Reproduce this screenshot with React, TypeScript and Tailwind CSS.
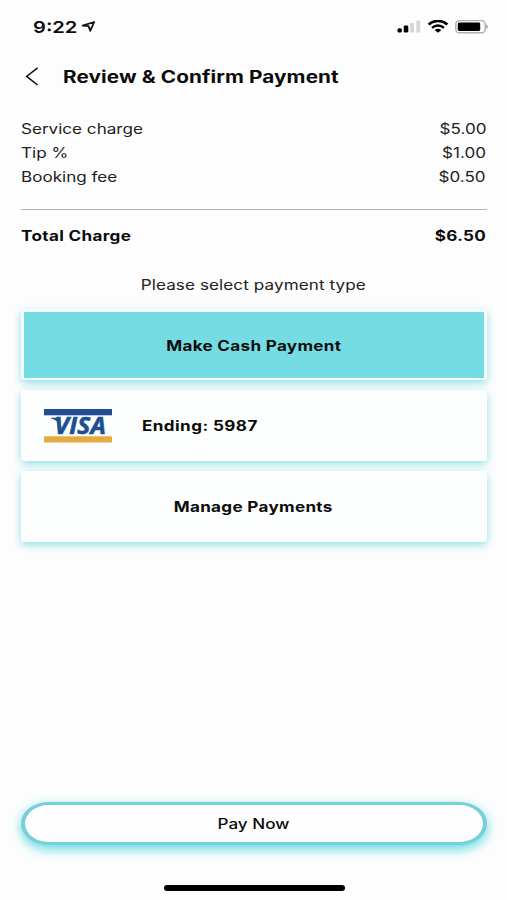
import type { ReactNode } from "react";

const charges = [
    { label: "Service charge", amount: "$5.00" },
    { label: "Tip %", amount: "$1.00" },
    { label: "Booking fee", amount: "$0.50" },
];

const SignalIcon = () => (
    <svg width="24" height="14" viewBox="0 0 24 14">
        <rect x="0.5" y="8.2" width="4.4" height="4.4" rx="1.6" fill="#000" />
        <rect x="6.7" y="5.6" width="4.6" height="7" rx="1.4" fill="#000" />
        <rect x="13.2" y="3" width="3.8" height="9.6" rx="1.2" fill="#d6d6d6" />
        <rect x="19.4" y="0.6" width="3.8" height="12" rx="1.2" fill="#d6d6d6" />
    </svg>
)

const WifiIcon = () => (
    <svg width="22" height="14" viewBox="0 0 22 14" fill="none" stroke="#000">
        <path d="M1.6 4.4C7 -0.2 15 -0.2 20.4 4.4" strokeWidth="2.6" />
        <path d="M5 7.8C8.5 4.8 13.5 4.8 17 7.8" strokeWidth="2.4" />
        <path d="M7.6 9.9C9.6 8.2 12.4 8.2 14.4 9.9L11 12.8Z" fill="#000" stroke="none" />
    </svg>
)

const BatteryIcon = () => (
    <svg width="34" height="14" viewBox="0 0 34 14">
        <rect x="0.8" y="0.6" width="29.4" height="12.2" rx="3.6" fill="none" stroke="#b2b2b2" strokeWidth="1.5" />
        <rect x="2.8" y="2.5" width="22.4" height="8.4" rx="1.4" fill="#000" />
        <path d="M31.2 4.6C33.6 5.1 33.6 8.3 31.2 8.8Z" fill="#a9a9a9" />
    </svg>
)

const VisaLogo = () => (
    <svg width="68" height="34" viewBox="0 0 68 34">
        <rect x="0" y="0" width="68" height="6.3" fill="#204e92" />
        <rect x="0" y="27.3" width="68" height="6.2" fill="#e5aa42" />
        <path d="M7 8.8H14.5L17 20C15.4 14 12 10.4 7 9.5Z" fill="#204e92" />
        <text x="10.5" y="25" textLength="51.5" lengthAdjust="spacingAndGlyphs" className="font-['Open_Sans',sans-serif] text-[22.5px] font-bold italic" fill="#204e92" stroke="#204e92" strokeWidth="0.6">VISA</text>
    </svg>
)

// wide lettering, stretched from the given side
const Wide = ({ children, className = "" }: { children: ReactNode, className?: string }) => (
    <span className={"inline-block whitespace-nowrap scale-x-[1.22] " + className}>{children}</span>
)

export default function App () {
    return (
        <div className="flex h-[900px] w-[507px] flex-col overflow-hidden bg-[#fdfdfd] font-['Inter',sans-serif] text-[#0c0c0c]">
            <div className="flex h-[52px] items-center justify-between pl-[33px] pr-[18px] pt-px">
                <div className="flex items-center">
                    <Wide className="w-[48px] origin-left pt-px text-[16.5px] font-semibold">9:22</Wide>
                    <svg width="15" height="12" viewBox="0 0 15 12" fill="none" stroke="#111" strokeWidth="1.8" strokeLinejoin="round">
                        <path d="M1.6 4.6L13.2 1L9.2 9.8L7.6 5.2Z" />
                    </svg>
                </div>
                <div className="flex items-center gap-[6px]">
                    <SignalIcon />
                    <WifiIcon />
                    <BatteryIcon />
                </div>
            </div>

            <div className="flex h-[48px] items-center pl-[25px]">
                <svg width="14" height="20" viewBox="0 0 14 20" fill="none" stroke="#111" strokeWidth="1.5">
                    <path d="M12.6 1.8L1.6 10.4L12.6 19" />
                </svg>
                <Wide className="ml-[24px] origin-left pt-[3px] text-[17px] font-bold tracking-[0.08px]">Review &amp; Confirm Payment</Wide>
            </div>

            <div className="ml-[21px] mr-[20px] mt-[17px] border-b border-[#b4b4b4] pb-[20px] text-[14px] leading-6 text-[#222]">
                {charges.map((charge) => (
                    <div key={charge.label} className="flex justify-between">
                        <Wide className="origin-left">{charge.label}</Wide>
                        <Wide className="mr-px origin-right">{charge.amount}</Wide>
                    </div>
                ))}
            </div>

            <div className="ml-[21px] mr-[20px] mt-[14px] flex justify-between text-[14px] font-bold leading-6">
                <Wide className="origin-left tracking-[0.28px]">Total Charge</Wide>
                <Wide className="mr-px origin-right tracking-[0.28px]">$6.50</Wide>
            </div>

            <div className="mt-[25px] text-center text-[14px] leading-6 text-[#222]">
                <Wide className="tracking-[0.08px]">Please select payment type</Wide>
            </div>

            <div className="ml-[21px] mr-[20px] mt-[12px] flex flex-col gap-[10px] text-[14px] font-bold tracking-[0.26px]">
                <button className="h-[71px] rounded-[3px] border-[3px] border-b-2 border-[#f4fdfe] bg-[#76dce4] pr-px shadow-[0_3px_9px_#93dfea]">
                    <Wide>Make Cash Payment</Wide>
                </button>
                <button className="flex h-[71px] items-center rounded-[3px] bg-[#fdfefe] pl-[23px] shadow-[0_3px_9px_#93dfea]">
                    <VisaLogo />
                    <Wide className="ml-[30px] origin-left tracking-[0.35px]">Ending: 5987</Wide>
                </button>
                <button className="h-[71px] rounded-[3px] bg-[#fdfefe] pr-[2px] shadow-[0_3px_9px_#93dfea]">
                    <Wide>Manage Payments</Wide>
                </button>
            </div>

            <button className="ml-[21px] mr-[20px] mt-auto h-[43px] shrink-0 rounded-[28px/22px] border-x-[4px] border-y-[3px] border-[#76d0d9] bg-[#fefefe] pr-[2px] text-[14px] font-medium shadow-[0_4px_12px_#5fd8e2]">
                <Wide>Pay Now</Wide>
            </button>
            <div className="mb-[9px] ml-[164px] mt-[40px] h-[6px] w-[181px] shrink-0 rounded-full bg-black" />
        </div>
    )
}
